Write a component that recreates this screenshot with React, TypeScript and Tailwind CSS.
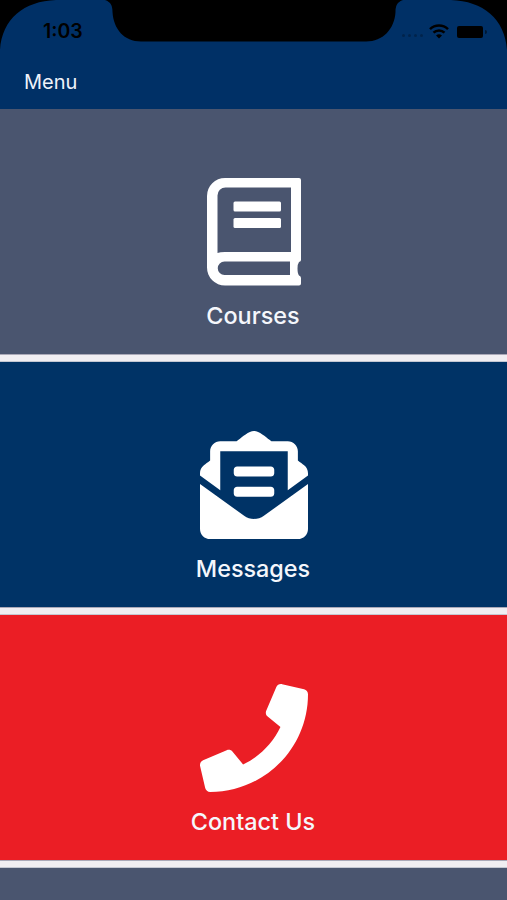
import { FaEnvelopeOpenText, FaPhone } from "react-icons/fa"

function BookIcon() {
  return (
    <svg width="94" height="108" viewBox="0 0 94 108" fill="none">
      <path
        fill="currentColor"
        fillRule="evenodd"
        d="M18 0H92A2 2 0 0 1 94 2V82Q94 83.500 92 84Q90.500 86 90.500 90.500Q90.500 95.500 92 97.500Q94 98 94 100V105.500Q94 107.500 92 107.500H18A18 18 0 0 1 0 89.500V18A18 18 0 0 1 18 0ZM18.500 9.500A8 8 0 0 0 10.500 17.500V75Q13 74 18 74H84V9.500ZM17.500 83.500A6.750 6.750 0 0 0 17.500 97H83V83.500Z"
      />
      <rect x="26.500" y="23.500" width="47.500" height="10" rx="1.500" fill="currentColor" />
      <rect x="26.500" y="40" width="47.500" height="10" rx="1.500" fill="currentColor" />
    </svg>
  )
}

const tiles = [
  { label: "Courses", icon: <BookIcon />, color: "bg-[#4a556f]" },
  { label: "Messages", icon: <FaEnvelopeOpenText size={108} />, color: "bg-[#003366]" },
  { label: "Contact Us", icon: <FaPhone size={108} />, color: "bg-[#eb1e25]" },
]

function StatusBar() {
  return (
    <div className="relative h-[56px]">
      {/* Screen corners and notch */}
      <svg className="absolute inset-0" width="507" height="56" viewBox="0 0 507 56" fill="#000">
        <path d="M0 0H56C24 1 2 19 0 50Z" />
        <path d="M507 0H451C483 1 505 19 507 50Z" />
        <path d="M105 0C111 2 112.500 6 112.500 12C113.500 29 124 41.500 141 41.500H366C383 41.500 394.500 29 395.500 12C395.500 6 397 2 403 0Z" />
      </svg>
      <div className="relative flex items-center justify-between pt-[21px] pr-[20px] pl-[43px] text-black">
        <span className="text-[19.500px] leading-[21px] font-semibold">1:03</span>
        <div className="flex items-center">
          <div className="mt-[8px] mr-[6px] flex gap-[3px] opacity-25">
            <i className="size-[3px] rounded-full bg-black" />
            <i className="size-[3px] rounded-full bg-black" />
            <i className="size-[3px] rounded-full bg-black" />
            <i className="size-[3px] rounded-full bg-black" />
          </div>
          <svg width="20" height="15" viewBox="0 0 20 15" fill="none" stroke="currentColor" strokeWidth="2.500">
            <path d="M1 5.200C6 0.300 14 0.300 19 5.200M4.500 8.700C7.500 5.800 12.500 5.800 15.500 8.700" />
            <path d="M10 14.500L7 11.500Q10 9 13 11.500Z" fill="currentColor" stroke="none" />
          </svg>
          <div className="ml-[8px] h-[12px] w-[26px] rounded-[2px] bg-black" />
          <div className="ml-[2px] h-[4px] w-[2px] rounded-r bg-black/50" />
        </div>
      </div>
    </div>
  )
}

export default function App() {
  return (
    <div className="h-[900px] w-[507px] overflow-hidden bg-[#f0eef2] font-[Inter,sans-serif]">
      <header className="h-[109px] bg-[#003066]">
        <StatusBar />
        <h1 className="pt-[12px] pl-[24px] text-[20px] leading-[28px] text-[#eef2fa]">Menu</h1>
      </header>
      <main>
        {tiles.map(({ label, icon, color }) => (
          <section key={label}>
            <div className={`flex h-[245px] flex-col items-center pt-[69px] text-white ${color}`}>
              {icon}
              <span className="mt-[14px] mr-px text-[23.400px] leading-[32px] font-medium text-[#f5f7fc]">{label}</span>
            </div>
            {/* Divider */}
            <div className="h-[8px] border-t border-b border-t-[#aaa9b8] border-b-[#c4c8d2]" />
          </section>
        ))}
        <div className="h-[32px] bg-[#4a556f]" />
      </main>
    </div>
  )
}
